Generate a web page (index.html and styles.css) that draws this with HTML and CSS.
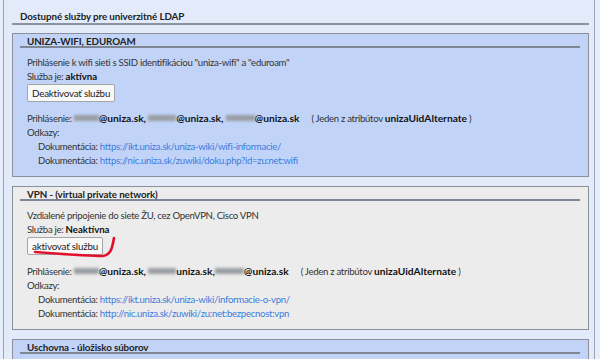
FILE: index.html
```html
<!DOCTYPE html>
<html lang="sk">
<head>
    <meta charset="UTF-8">
    <title>Dostupné služby pre univerzitné LDAP</title>
    <link rel="stylesheet" href="styles.css">
</head>
<body>
    <div class="page">
        <h2 class="title">Dostupné služby pre univerzitné LDAP</h2>

        <div class="service blue">
            <h3>UNIZA-WIFI, EDUROAM</h3>
            <p>Prihlásenie k wifi sieti s SSID identifikáciou "uniza-wifi" a "eduroam"</p>
            <p>Služba je: <b>aktívna</b></p>
            <button type="button">Deaktivovať službu</button>
            <p class="login">Prihlásenie: <span class="blur w1"></span><b>@uniza.sk,</b> <span class="blur w2"></span><b>@uniza.sk,</b> <span class="blur w3"></span><b>@uniza.sk</b><span class="attr">( Jeden z atribútov <b>unizaUidAlternate</b> )</span></p>
            <p>Odkazy:</p>
            <p class="doc">Dokumentácia: <a href="#">https://ikt.uniza.sk/uniza-wiki/wifi-informacie/</a></p>
            <p class="doc">Dokumentácia: <a href="#">https://nic.uniza.sk/zuwiki/doku.php?id=zu:net:wifi</a></p>
        </div>

        <div class="service gray">
            <h3>VPN - (virtual private network)</h3>
            <p>Vzdialené pripojenie do siete ŽU, cez OpenVPN, Cisco VPN</p>
            <p>Služba je: <b>Neaktívna</b></p>
            <button type="button">aktivovať službu</button>
            <p class="login">Prihlásenie: <span class="blur w1"></span><b>@uniza.sk,</b> <span class="blur w2"></span><b>uniza.sk,</b><span class="blur w3"></span><b>@uniza.sk</b><span class="attr">( Jeden z atribútov <b>unizaUidAlternate</b> )</span></p>
            <p>Odkazy:</p>
            <p class="doc">Dokumentácia: <a href="#">https://ikt.uniza.sk/uniza-wiki/informacie-o-vpn/</a></p>
            <p class="doc">Dokumentácia: <a href="#">http://nic.uniza.sk/zuwiki/zu:net:bezpecnost:vpn</a></p>
            <svg class="mark" width="100" height="30" viewBox="0 0 100 30">
                <path d="M3 17 C 30 19, 58 21, 71 21 C 78 20, 80 15, 82 3" fill="none" stroke="#e3102c" stroke-width="2.6" stroke-linecap="round"/>
            </svg>
        </div>

        <div class="service blue">
            <h3>Uschovna - úložisko súborov</h3>
            <p>Úschovňa súborov</p>
        </div>
    </div>
</body>
</html>
```

FILE: styles.css
```css
html, body {
    margin: 0;
    background: #e7eefb;
    overflow: hidden;
}

body {
    font-family: Lato, "Open Sans", Arial, sans-serif;
    font-size: 9.6px;
    letter-spacing: -0.3px;
    color: #333;
}

.page {
    margin: 0 5px 0 3px;
    height: 400px;
    border-left: 1px solid #9aa3b3;
    border-right: 1px solid #9aa3b3;
    background: #e3ebfa;
    padding: 10px 5px 0 8px;
}

.title {
    margin: 0;
    font-size: 9.8px;
    font-weight: bold;
    letter-spacing: -0.1px;
    color: #222;
    line-height: 12px;
    padding: 0 0 1px 8px;
    border-bottom: 2px solid #8b939f;
}

.service {
    position: relative;
    margin-top: 8px;
    border: 1px solid #8c9098;
    padding: 0 8px 8px 7px;
}

.service + .service {
    margin-top: 9px;
}

.blue {
    background: #c1d4f8;
}

.gray {
    background: #ececec;
}

.service h3 {
    margin: 0;
    font-size: 9.8px;
    letter-spacing: -0.1px;
    color: #222;
    line-height: 12px;
    padding: 1px 0 0 7px;
    height: 11px;
    border-bottom: 2px solid #7f8794;
}

.service p {
    margin: 0;
    padding-left: 7px;
    line-height: 14px;
}

.service h3 + p {
    margin-top: 8px;
}

.service p b {
    color: #111;
    letter-spacing: 0;
}

.login b {
    font-size: 10.2px;
}

button {
    display: block;
    margin: 0 0 0 7px;
    height: 18px;
    padding: 0 4px;
    font-family: inherit;
    font-size: 9.8px;
    letter-spacing: -0.2px;
    color: #222;
    background: #f8f8f8;
    border: 1px solid #a6a6a6;
    border-radius: 2px;
}

.login {
    margin-top: 9px !important;
}

.blur {
    display: inline-block;
    height: 6px;
    background: #9a9da3;
    filter: blur(1.4px);
    vertical-align: 1px;
}

.w1 { width: 25px; }
.w2 { width: 28px; }
.w3 { width: 29px; }

.attr {
    margin-left: 12px;
}

.doc {
    padding-left: 18px !important;
}

.doc a {
    color: #3b7ddd;
    text-decoration: none;
}

.mark {
    position: absolute;
    left: 19px;
    top: 48px;
}
```
